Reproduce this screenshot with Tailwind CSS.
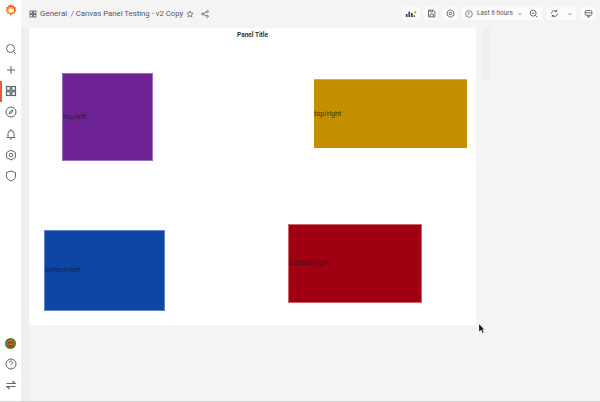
<!DOCTYPE html>
<html lang="en">

<head>
  <title>Canvas Panel Testing - v2 Copy</title>
  <meta charset="utf-8">
  <script src="https://cdn.jsdelivr.net/npm/@tailwindcss/browser@4"></script>
</head>

<body class="relative w-[600px] h-[402px] overflow-hidden flex bg-[#f4f4f4] border-b border-b-[#d4d4d4] font-['Roboto',sans-serif] text-[#555a62]">
  <!-- side menu -->
  <aside class="relative w-[21px] h-full bg-white flex flex-col items-center shrink-0">
    <svg class="w-[13px] h-[14px] mt-[3px]" viewBox="0 0 24 24">
      <path fill="#f05a28" d="M12 1l2.5 3 3.5-1 .8 3.4 3.4 1-1.2 3.3 2 2.8-3 1.8-.2 3.5-3.5-.2L12 22l-2.300-3.400-3.500.2-.2-3.500-3-1.800 2-2.800L3.800 7.400l3.400-1L8 3l3.500 1z" />
      <circle cx="12.500" cy="12.500" r="6" fill="#fff" />
      <path fill="none" stroke="#f9a11b" stroke-width="2.400" d="M17 11a5 5 0 1 0-.500 4.500" />
    </svg>
    <div class="flex flex-col items-center mt-[26px] gap-[9.170px]">
      <svg class="w-[12px] h-[12px]" viewBox="0 0 24 24" fill="none" stroke="#5f646b" stroke-width="2"><circle cx="11" cy="11" r="8" /><path d="M17 17l5 5" /></svg>
      <svg class="w-[12px] h-[12px]" viewBox="0 0 24 24" fill="none" stroke="#5f646b" stroke-width="2"><path d="M12 4v16M4 12h16" /></svg>
      <svg class="w-[12px] h-[12px]" viewBox="0 0 24 24" fill="none" stroke="#5f646b" stroke-width="2.400"><rect x="3" y="3" width="7.500" height="7.500" /><rect x="13.500" y="3" width="7.500" height="7.500" /><rect x="3" y="13.500" width="7.500" height="7.500" /><rect x="13.500" y="13.500" width="7.500" height="7.500" /></svg>
      <svg class="w-[12px] h-[12px]" viewBox="0 0 24 24" fill="none" stroke="#5f646b" stroke-width="2"><circle cx="12" cy="12" r="10" /><path d="M16 8l-2.500 5.500L8 16l2.500-5.500z" /></svg>
      <svg class="w-[12px] h-[12px]" viewBox="0 0 24 24" fill="none" stroke="#5f646b" stroke-width="2"><path d="M6 17v-6a6 6 0 0 1 12 0v6l2 2H4zM10 22h4M12 2v3" /></svg>
      <svg class="w-[12px] h-[12px]" viewBox="0 0 24 24" fill="none" stroke="#5f646b" stroke-width="2"><path d="M12 2l8.700 5v10L12 22l-8.700-5V7z" /><circle cx="12" cy="12" r="3.500" /></svg>
      <svg class="w-[12px] h-[12px]" viewBox="0 0 24 24" fill="none" stroke="#5f646b" stroke-width="2"><path d="M12 2l9 3v7c0 5-4 8.500-9 10-5-1.500-9-5-9-10V5z" /></svg>
    </div>
    <div class="mt-auto mb-[10px] flex flex-col items-center gap-[9px]">
      <svg class="w-[11px] h-[11px]" viewBox="0 0 24 24"><circle cx="12" cy="12" r="12" fill="#5b7a2e" /><circle cx="12" cy="11" r="7" fill="#c8602c" /><circle cx="9" cy="10" r="1.800" fill="#3a2a1a" /><circle cx="15" cy="10" r="1.800" fill="#3a2a1a" /><path d="M8 16h8v3H8z" fill="#8d3a22" /></svg>
      <svg class="w-[12px] h-[12px]" viewBox="0 0 24 24" fill="none" stroke="#5f646b" stroke-width="2"><circle cx="12" cy="12" r="10" /><path d="M9 9.500a3 3 0 1 1 4.500 2.600c-1 .6-1.500 1.200-1.500 2.400M12 17v1.500" /></svg>
      <svg class="w-[12px] h-[12px]" viewBox="0 0 24 24" fill="none" stroke="#5f646b" stroke-width="2.400"><path d="M3 9h17l-5-5M21 15H4l5 5" /></svg>
    </div>
    <div class="absolute left-0 top-[81px] w-[2px] h-[21px] bg-[#f05a28]"></div>
  </aside>

  <main class="flex-1 flex flex-col min-w-0">
    <!-- top bar -->
    <header class="h-[28px] flex items-start shrink-0 pt-[7px] pl-[8px]">
      <div class="flex items-center h-[13px] text-[8px] whitespace-nowrap">
        <svg class="w-[8px] h-[8px] mr-[3px]" viewBox="0 0 24 24" fill="none" stroke="#555a62" stroke-width="2.400"><rect x="3" y="3" width="7.500" height="7.500" /><rect x="13.500" y="3" width="7.500" height="7.500" /><rect x="3" y="13.500" width="7.500" height="7.500" /><rect x="13.500" y="13.500" width="7.500" height="7.500" /></svg>
        <span>General</span>
        <span class="ml-[3.500px] text-[7.750px]">/ Canvas Panel Testing - v2 Copy</span>
        <svg class="w-[8px] h-[8px] ml-[3px]" viewBox="0 0 24 24" fill="none" stroke="#555a62" stroke-width="2.200"><path d="M12 3l2.800 5.900 6.400.8-4.700 4.400 1.200 6.400L12 17.400l-5.700 3.100 1.200-6.400-4.700-4.400 6.400-.8z" /></svg>
        <svg class="w-[8px] h-[8px] ml-[7px]" viewBox="0 0 24 24" fill="none" stroke="#555a62" stroke-width="2.400"><circle cx="5" cy="12" r="3" /><circle cx="19" cy="5" r="3" /><circle cx="19" cy="19" r="3" /><path d="M8 10.500l8-4M8 13.500l8 4" /></svg>
      </div>
      <div class="ml-auto mr-[5px] flex h-[13px]">
        <div class="w-[17px] bg-[#fbfbfb] flex items-center justify-center">
          <svg class="w-[12px] h-[9px]" viewBox="0 0 28 20"><path d="M2 18v-7h4v7zM8 18V6h4v12zM14 18v-9h4v9z" fill="#3d4249" /><path d="M20 18v-4h3v4z" fill="#3d4249" /><path d="M24 3l1.200 3 3 1-3 1-1.200 3-1.200-3-3-1 3-1z" fill="#f2890f" /></svg>
        </div>
        <div class="w-[14px] ml-[5px] bg-[#fbfbfb] flex items-center justify-center">
          <svg class="w-[9px] h-[9px]" viewBox="0 0 24 24" fill="none" stroke="#5f646b" stroke-width="2.400"><path d="M4 3h13l4 4v14H4zM8 3v5h7V3M8 21v-7h9v7" /></svg>
        </div>
        <div class="w-[14px] ml-[5px] bg-[#fbfbfb] flex items-center justify-center">
          <svg class="w-[9px] h-[9px]" viewBox="0 0 24 24" fill="none" stroke="#5f646b" stroke-width="2.400"><path d="M12 2l8.700 5v10L12 22l-8.700-5V7z" /><circle cx="12" cy="12" r="3.500" /></svg>
        </div>
        <div class="w-[80px] ml-[5px] bg-[#fbfbfb] flex items-center pl-[3px] whitespace-nowrap">
          <svg class="w-[8px] h-[8px] mr-[4px] shrink-0" viewBox="0 0 24 24" fill="none" stroke="#5f646b" stroke-width="2.200"><circle cx="12" cy="12" r="10" /><path d="M12 6v6l-4 3" /></svg>
          <span class="w-[35px] text-[6.500px]">Last 6 hours</span>
          <svg class="w-[6px] h-[6px] ml-[5px] shrink-0" viewBox="0 0 24 24" fill="none" stroke="#5f646b" stroke-width="3"><path d="M6 9l6 6 6-6" /></svg>
          <svg class="w-[9px] h-[9px] ml-[6px] shrink-0" viewBox="0 0 24 24" fill="none" stroke="#5f646b" stroke-width="2.400"><circle cx="11" cy="11" r="8" /><path d="M17 17l5 5M7.500 11h7" /></svg>
        </div>
        <div class="w-[29px] ml-[5px] bg-[#fbfbfb] flex items-center pl-[3px]">
          <svg class="w-[9px] h-[9px] shrink-0" viewBox="0 0 24 24" fill="none" stroke="#5f646b" stroke-width="2.400"><path d="M20 12a8 8 0 0 1-14 5.300M4 12a8 8 0 0 1 14-5.300M18 2v5h-5M6 22v-5h5" /></svg>
          <svg class="w-[6px] h-[6px] ml-[8px] shrink-0" viewBox="0 0 24 24" fill="none" stroke="#5f646b" stroke-width="3"><path d="M6 9l6 6 6-6" /></svg>
        </div>
        <div class="w-[14px] ml-[5px] bg-[#fbfbfb] flex items-center justify-center">
          <svg class="w-[9px] h-[9px]" viewBox="0 0 24 24" fill="none" stroke="#5f646b" stroke-width="2.400"><rect x="3" y="4" width="18" height="13" rx="3" /><path d="M3 10h18M8 21h8M12 17v4" /></svg>
        </div>
      </div>
    </header>

    <div class="flex-1 flex items-start">
      <div class="w-[8px] h-full bg-[#efefef] shrink-0"></div>
      <!-- canvas panel -->
      <section class="relative w-[447px] h-[297px] bg-white">
        <h2 class="h-[14px] pt-[2px] flex items-center justify-center text-[6.500px] font-semibold text-[#24292e]">Panel Title</h2>
        <div class="absolute left-[33px] top-[45px] w-[91px] h-[88px] bg-[#6d2394] border border-[#9c6fb6] flex items-center text-[7px] text-[#2d1c3d]">top/left</div>
        <div class="absolute left-[285px] top-[51px] w-[153px] h-[69px] bg-[#c18f00] border-t border-t-[#d2b050] flex items-center text-[7px] text-[#3c3008]">top/right</div>
        <div class="absolute left-[15px] top-[202px] w-[121px] h-[81px] bg-[#0f46a4] border border-[#5f87c9] flex items-center text-[7px] text-[#10244f]">bottom/left</div>
        <div class="absolute left-[259px] top-[196px] w-[134px] h-[79px] bg-[#a00012] border border-[#cf6571] flex items-center text-[7px] text-[#4a0f1d]">bottom/right</div>
      </section>
      <div class="ml-[7px] w-[7px] h-[52px] bg-[#efefef]"></div>
    </div>
  </main>

  <!-- mouse pointer -->
  <svg class="absolute left-[479px] top-[324px] w-[6px] h-[9px]" viewBox="0 0 6 9"><path d="M0 0l5.500 5.500H3.400L4.800 8.500 3.500 9 2.200 6 0 7.500z" fill="#111" stroke="#fff" stroke-width=".3" /></svg>
</body>

</html>
